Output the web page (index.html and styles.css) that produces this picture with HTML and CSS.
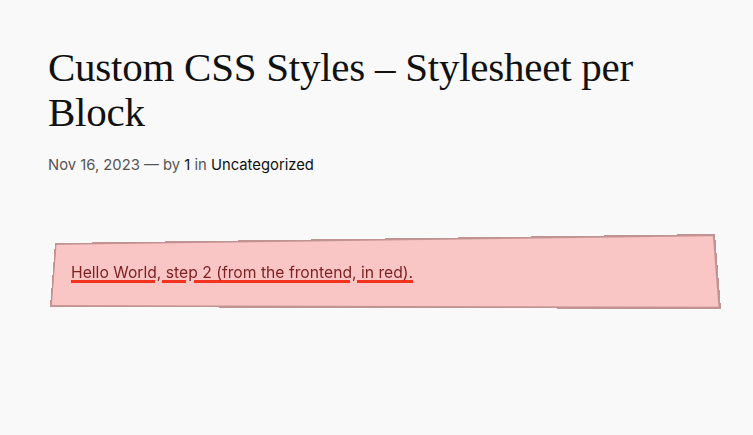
FILE: index.html
```html
<!DOCTYPE html>
<html lang="en">
<head>
<meta charset="utf-8">
<title>Custom CSS Styles – Stylesheet per Block</title>
<link rel="stylesheet" href="styles.css">
</head>
<body>
<main class="post">
  <h1 class="post-title">Custom CSS Styles – Stylesheet per Block</h1>
  <div class="post-meta">
    <span class="meta-date">Nov 16, 2023</span>
    <span class="meta-sep">— by</span>
    <a class="meta-link" href="#">1</a>
    <span class="meta-sep">in</span>
    <a class="meta-link" href="#">Uncategorized</a>
  </div>
  <div class="custom-block">
    <p class="custom-text">Hello World, step 2 (from the frontend, in red).</p>
  </div>
</main>
</body>
</html>
```

FILE: styles.css
```css
html, body {
  margin: 0;
  padding: 0;
  background: #f9f9f9;
}

.post {
  padding: 45px 48px 0 48px;
}

.post-title {
  margin: 0;
  font-family: "Liberation Serif", "Times New Roman", serif;
  font-weight: 400;
  font-size: 41px;
  line-height: 45px;
  color: #111;
  letter-spacing: -0.25px;
}

.post-meta {
  margin-top: 20px;
  font-family: Inter, "Noto Sans", sans-serif;
  font-size: 14.8px;
  line-height: 20px;
  color: #555;
}

.meta-link {
  color: #111;
  text-decoration: none;
}

.custom-block {
  position: relative;
  margin-top: 68px;
  margin-left: 7px;
  width: 664px;
  height: 68px;
  box-sizing: border-box;
  padding: 18px 16px 0 16px;
}

.custom-block::before {
  content: "";
  position: absolute;
  left: 0;
  top: 0;
  width: 664px;
  height: 68px;
  box-sizing: border-box;
  background: #f9c6c5;
  border: 2px solid #c29393;
  transform-origin: 0 0;
  transform: matrix3d(0.848593, -0.011572, 0, -0.00022028,
                      -0.072421, 0.926978, 0, -0.00022185,
                      0, 0, 1, 0,
                      0, 0, 0, 1);
}

.custom-text {
  position: relative;
  margin: 0;
  font-family: Inter, "Noto Sans", sans-serif;
  font-size: 15.7px;
  line-height: 24px;
  color: #7e2222;
  text-decoration: underline;
  text-decoration-color: #f0321e;
  text-decoration-thickness: 3px;
  text-underline-offset: 2px;
  text-decoration-skip-ink: auto;
}
```
